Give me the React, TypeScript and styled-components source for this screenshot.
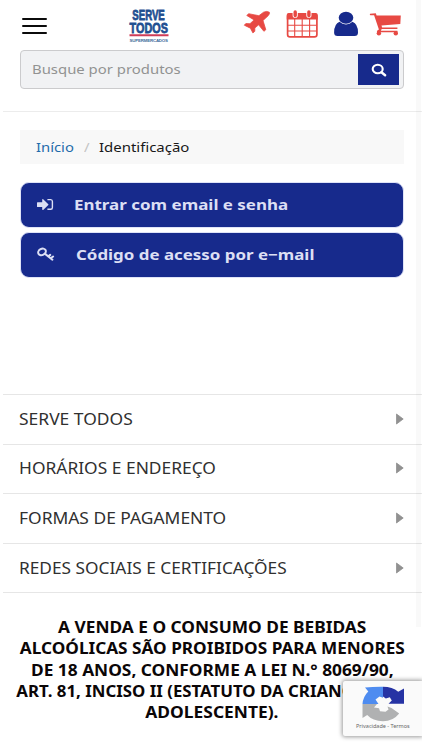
import React from "react";
import styled, { createGlobalStyle } from "styled-components";

const Global = createGlobalStyle`
  * { box-sizing: border-box; }
  body { margin: 0; background: #fff; font-family: "Noto Sans", "Open Sans", sans-serif; }
`;

const Page = styled.main`
  position: relative;
  width: 422px;
  height: 750px;
  overflow: hidden;
  background: #fff;
`;

const EdgeShade = styled.div`
  position: absolute;
  top: 0;
  right: 1px;
  width: 5px;
  height: 627px;
  background: rgba(0, 0, 0, 0.022);
`;

/* Extended lettering: a normal face widened horizontally. */
const Wide = styled.span<{ $size: number; $k: number; $origin?: string }>`
  display: inline-block;
  white-space: nowrap;
  font-size: ${(p) => p.$size}px;
  transform: scaleX(${(p) => p.$k});
  transform-origin: ${(p) => p.$origin ?? "left"} center;
`;

const Header = styled.header`
  height: 112px;
  margin-left: 3px;
  padding: 8px 18px 0 16.5px;
  border-bottom: 1px solid #ececec;
`;

const TopRow = styled.div`
  display: flex;
  height: 42px;
`;

const MenuButton = styled.button`
  display: flex;
  flex-direction: column;
  gap: 5.3px;
  width: 25px;
  margin: 9.7px 82px 0 2px;
  padding: 0;
  border: 0;
  background: none;
`;

const MenuBar = styled.span`
  width: 25px;
  height: 2px;
  border-radius: 1px;
  background: #0b0b0b;
`;

const Logo = styled.div`
  width: 40px;
  height: 36px;
`;

const Actions = styled.nav`
  display: flex;
  margin-left: 73.5px;
  svg { flex: none; display: block; }
`;

const Search = styled.form`
  display: flex;
  align-items: center;
  justify-content: space-between;
  height: 39px;
  padding: 0 4px 0 11.5px;
  border: 1px solid #cbcbcd;
  border-radius: 4px;
  background: #f1f2f4;
  color: #929292;
`;

const Placeholder = styled.label`
  margin-top: -3px;
`;

const SearchButton = styled.button`
  display: grid;
  place-items: center;
  width: 41px;
  height: 31px;
  padding: 0;
  border: 0;
  background: #172a8c;
`;

const Content = styled.section`
  height: 282px;
  padding: 18px 18px 0 19.5px;
`;

const Breadcrumb = styled.nav`
  display: flex;
  align-items: center;
  height: 34px;
  padding: 0 0 2px 16.5px;
  background: #f8f8f8;
`;

const Crumb = styled.span<{ $w: number; $color: string }>`
  flex: none;
  width: ${(p) => p.$w}px;
  color: ${(p) => p.$color};
`;

const Options = styled.div`
  display: flex;
  flex-direction: column;
  gap: 4px;
  margin-top: 18px;
`;

const Option = styled.button<{ $gap: number }>`
  display: flex;
  align-items: center;
  gap: ${(p) => p.$gap}px;
  height: 46px;
  padding: 0 0 2px 16px;
  border: 1px solid #dfe3f7;
  border-radius: 9px;
  background: #172a8c;
  color: #dcdff4;
  font-family: inherit;
  font-weight: 700;
  svg { flex: none; }
`;

const Sections = styled.div`
  margin-left: 3px;
  border-top: 1px solid #e6e6e6;
`;

const SectionRow = styled.div`
  display: flex;
  align-items: center;
  justify-content: space-between;
  height: 49.6px;
  padding: 0 18px 0 16.3px;
  border-bottom: 1px solid #e6e6e6;
  color: #303030;
  svg { margin-bottom: 1px; }
`;

const Notice = styled.p`
  display: flex;
  flex-direction: column;
  align-items: center;
  margin: 24px 0 0;
  padding-left: 2px;
  font-weight: 700;
  line-height: 21.1px;
  color: #0b0607;
`;

const Badge = styled.aside`
  position: absolute;
  left: 343px;
  top: 681px;
  width: 79px;
  height: 55px;
  padding-top: 5px;
  border-radius: 2px 0 0 2px;
  background: #fafafa;
  box-shadow: 0 0 4px 1px rgba(0, 0, 0, 0.4);
  display: flex;
  flex-direction: column;
  align-items: center;
  color: #666;
`;

const RED = "#e74943";
const BLUE = "#172a8c";

const LogoMark = () => (
  <svg width="40" height="36" viewBox="0 0 40 36" overflow="visible">
    <g fontFamily="Liberation Sans, sans-serif" fontWeight="700" fill="#1f4f91" stroke="#1f4f91" strokeWidth=".8">
      <text x="3.300" y="12.300" fontSize="15" textLength="32.500" lengthAdjust="spacingAndGlyphs">SERVE</text>
      <text x="0.600" y="24.600" fontSize="15" textLength="38.300" lengthAdjust="spacingAndGlyphs">TODOS</text>
    </g>
    <path d="M0.500 27.300h39" stroke="#cf3c58" strokeWidth="2" />
    <text x="0.500" y="33.500" fontSize="4.400" fontWeight="700" fontFamily="Liberation Sans, sans-serif" fill="#426d9b" textLength="38.500" lengthAdjust="spacing">SUPERMERCADOS</text>
  </svg>
);

const ActionIcons = () => (
  <svg width="160" height="32" viewBox="242 8 160 32">
    <path fill={RED} stroke={RED} strokeWidth=".8" strokeLinejoin="round" d="M269.300 12.200q.8 1.300-1.200 3.600l-5.100 4.700 2.800 9.200-1.900 1.600-5.300-6.500-3.800 3.200v3.300l-1.900 1.600-2.500-4.700-6.100-3 1.500-1.600 4.200.1 4.100-3.800-7.300-4.400 1.800-1.800 10.300 2 4.700-3.500q3.200-1.500 5.700 0z" />
    <rect x="287.600" y="14" width="29.300" height="22.900" rx="2.400" fill="#fff" stroke={RED} strokeWidth="1.700" />
    <path d="M286.700 15q0-2 2-2h27q2 0 2 2v4.600h-31z" fill={RED} />
    <path d="M288 25.200h28.500M288 31h28.500M294.700 19v18M302.200 19v18M309.600 19v18" stroke={RED} strokeWidth="1.100" />
    <path d="M295.200 12.200v3M308.900 12.200v3" stroke="#fff" strokeWidth="5.200" strokeLinecap="round" />
    <path d="M295.200 12v3.500M308.900 12v3.500" stroke={RED} strokeWidth="3.400" strokeLinecap="round" />
    <path fill={BLUE} d="M339.500 21.800q-5.300 2-5.400 10.700 0 3.500 3.400 3.500h17q3.500 0 3.500-3.500-.1-8.700-5.500-10.700-2.800 2.600-6.500 2.600t-6.500-2.600z" />
    <ellipse cx="346" cy="17.700" rx="7.300" ry="6" fill={BLUE} />
    <path fill={RED} d="M370 13.700q-.6 1 .4 1.500h3.700l4.800 14.200-1.600 1.200q-1.200 1.400.6 1.700h19.500v-1.500h-16.500l.8-1.700h15.700v-1.500h-15.300l-.6-2.100 18.800-1.600.5-8.500h-24.200l-.8-2.200z" />
    <circle cx="378.900" cy="33.300" r="2.200" fill={RED} />
    <circle cx="395.800" cy="33.300" r="2.200" fill={RED} />
  </svg>
);

const SearchIcon = () => (
  <svg width="16" height="14" viewBox="0 0 16 14" fill="none" stroke="#fff">
    <ellipse cx="6.700" cy="6" rx="5" ry="4.300" strokeWidth="2.100" />
    <path d="M10.400 9.300l3.700 2.900" strokeWidth="2.500" strokeLinecap="round" />
  </svg>
);

const SignInIcon = () => (
  <svg width="17" height="13" viewBox="0 0 17 13">
    <path fill="#dcdff4" d="M.4 4.300h4.800V1.400q.3-.8 1-.2l5.100 5q.4.500 0 .9l-5.100 4.800q-.8.500-1-.3V8.900H.4Q0 8.900 0 8.400V4.700z" />
    <path fill="none" stroke="#dcdff4" strokeWidth="1.400" d="M10.400 1.600h3.300q1.700 0 1.700 1.800v6q0 1.800-1.700 1.800h-3.300" />
  </svg>
);

const KeyIcon = () => (
  <svg width="18" height="15" viewBox="0 0 18 15" fill="none" stroke="#dcdff4">
    <ellipse cx="5" cy="4.900" rx="4" ry="3.100" strokeWidth="2" transform="rotate(-28 5 4.900)" />
    <path d="M7.800 6.600l7.600 6.100M11.200 9.400l2-1.500M13.700 11.300l2.400-1.800" strokeWidth="2" strokeLinecap="round" />
  </svg>
);

const Arrow = () => (
  <svg width="8" height="12" viewBox="0 0 8 12">
    <path d="M.5 1l6.700 5-6.700 5z" fill="#919191" stroke="#919191" strokeWidth=".8" strokeLinejoin="round" />
  </svg>
);

const RecaptchaIcon = () => (
  <svg width="42" height="36" viewBox="0 0 42 36">
    <path fill="#4e8cf0" d="M21 .8v11l-3.500-1.300-4 3 3 4.500H.5Q1 10.500 6.300 5.400L3 1.500q8-.8 18-.7z" />
    <path fill="#2633a4" d="M21 .8q9.500 0 15.200 5L42 2.500v15.300H26.500l3.300-3.300-2-3.300-4 1.300-2.800-2z" />
    <path fill="#b0b1b2" d="M.5 18h14.500l-3 3.500 5 .8 1 3 5.500.5 3-2.300-1-3 4 1.500 7.700 5.500Q31 35.300 21 35.300 10.700 35 5.200 29L.5 32z" />
  </svg>
);

const SECTIONS = [
  { label: "SERVE TODOS", k: 1.134 },
  { label: "HORÁRIOS E ENDEREÇO", k: 1.13 },
  { label: "FORMAS DE PAGAMENTO", k: 1.131 },
  { label: "REDES SOCIAIS E CERTIFICAÇÕES", k: 1.123 },
];

const NOTICE = [
  { text: "A VENDA E O CONSUMO DE BEBIDAS", k: 1.124 },
  { text: "ALCOÓLICAS SÃO PROIBIDOS PARA MENORES", k: 1.117 },
  { text: "DE 18 ANOS, CONFORME A LEI N.° 8069/90,", k: 1.124 },
  { text: "ART. 81, INCISO II (ESTATUTO DA CRIANÇA E DO", k: 1.093 },
  { text: "ADOLESCENTE).", k: 1.13 },
];

export default function App() {
  return (
    <Page>
      <Global />
      <Header>
        <TopRow>
          <MenuButton aria-label="Menu">
            <MenuBar />
            <MenuBar />
            <MenuBar />
          </MenuButton>
          <Logo><LogoMark /></Logo>
          <Actions><ActionIcons /></Actions>
        </TopRow>
        <Search>
          <Placeholder><Wide $size={13} $k={1.145}>Busque por produtos</Wide></Placeholder>
          <SearchButton type="button" aria-label="Buscar"><SearchIcon /></SearchButton>
        </Search>
      </Header>
      <Content>
        <Breadcrumb>
          <Crumb $w={47.5} $color="#1f6cab"><Wide $size={13} $k={1.14}>Início</Wide></Crumb>
          <Crumb $w={15} $color="#c4c4c4"><Wide $size={13} $k={1.15}>/</Wide></Crumb>
          <Crumb $w={100} $color="#181818"><Wide $size={13} $k={1.15}>Identificação</Wide></Crumb>
        </Breadcrumb>
        <Options>
          <Option $gap={20}><SignInIcon /><Wide $size={15} $k={1.13}>Entrar com email e senha</Wide></Option>
          <Option $gap={21}><KeyIcon /><Wide $size={15} $k={1.126}>Código de acesso por e−mail</Wide></Option>
        </Options>
      </Content>
      <Sections>
        {SECTIONS.map((s) => (
          <SectionRow key={s.label}>
            <Wide $size={15.4} $k={s.k}>{s.label}</Wide>
            <Arrow />
          </SectionRow>
        ))}
      </Sections>
      <Notice>
        {NOTICE.map((n) => (
          <Wide key={n.text} $size={15.4} $k={n.k} $origin="center">{n.text}</Wide>
        ))}
      </Notice>
      <EdgeShade />
      <Badge>
        <RecaptchaIcon />
        <Wide $size={5.3} $k={1.04} $origin="center">Privacidade - Termos</Wide>
      </Badge>
    </Page>
  );
}
